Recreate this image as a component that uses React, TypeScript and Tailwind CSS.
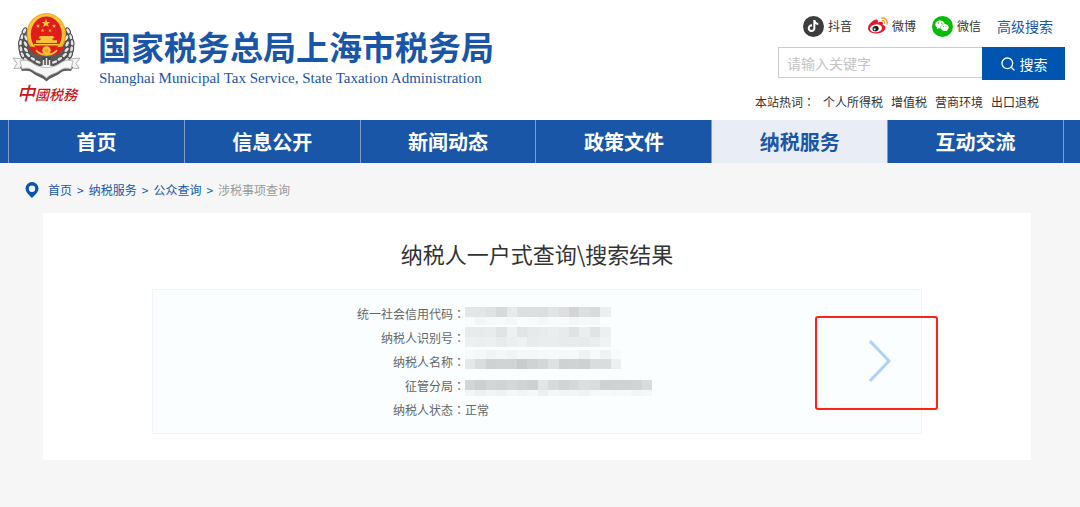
import { FaTiktok, FaWeixin } from "react-icons/fa";
import { FiSearch } from "react-icons/fi";

const navItems = [
  "首页",
  "信息公开",
  "新闻动态",
  "政策文件",
  "纳税服务",
  "互动交流",
];

const hotWords = ["个人所得税", "增值税", "营商环境", "出口退税"];

const crumbs = ["首页", "纳税服务", "公众查询"];

type Band = { y: number; h: number; shades: string[] };

type Field = { label: string; value?: string; bands?: Band[] };

const fields: Field[] = [
  {
    label: "统一社会信用代码",
    bands: [
      {
        y: 5,
        h: 10,
        shades: ["#e3e5e6", "#e3e5e6", "#dfe2e3", "#d7d9da", "#e6eaec", "#dcdedf", "#dcdedf", "#dddfdf", "#e2e5e6", "#dcdedf", "#d2d4d5", "#dddfdf", "#d9dbdb", "#eceff0"],
      },
      {
        y: 15,
        h: 8,
        shades: ["#f9fbfc", "#f3f6f7", "#f6f9fa", "#f6f9fa", "#f5f7f8", "#fafdfe", "#f8fbfc", "#f5f8f9", "#f8fbfc", "#f8fafb", "#f4f7f8", "#f6f9fa", "#f5f8f9"],
      },
    ],
  },
  {
    label: "纳税人识别号",
    bands: [
      {
        y: 1,
        h: 10,
        shades: ["#e8ebec", "#e8ebec", "#e9eced", "#e1e4e5", "#eef1f2", "#e2e4e5", "#e7e9ea", "#e8ebec", "#ebeeef", "#e8ebec", "#e0e3e4", "#ebedee", "#e1e3e4", "#edf0f1"],
      },
      {
        y: 11,
        h: 10,
        shades: ["#edf0f1", "#eceff0", "#edeff0", "#e8ebec", "#ecefef", "#f0f1f3", "#e8ebec", "#eaedee", "#eaedee", "#e8ebec", "#e9ebec", "#e8ebec", "#ebeeef", "#f0f3f4"],
      },
    ],
  },
  {
    label: "纳税人名称",
    bands: [
      {
        y: 0,
        h: 9,
        shades: ["#f7fafb", "#f5f8f9", "#f1f4f5", "#f4f7f8", "#f1f4f5", "#f5f8f9", "#f4f7f8", "#f6f9fa", "#f7fafb", "#f5f8f9", "#f6f9fa", "#eff2f3", "#f7fafb", "#f0f3f4", "#f8fbfc"],
      },
      {
        y: 9,
        h: 10,
        shades: ["#e5e7e8", "#dbdddd", "#d0d2d2", "#d2d4d4", "#d1d3d4", "#c9cbcd", "#d1d3d3", "#d4d6d7", "#dee0e1", "#cfd1d2", "#d1d3d3", "#ced0d1", "#dbdddd", "#dadcdd", "#edf0f1"],
      },
    ],
  },
  {
    label: "征管分局",
    bands: [
      {
        y: 6,
        h: 10,
        shades: ["#d3d5d6", "#cdcfd0", "#d3d5d6", "#d2d4d4", "#d6d8d8", "#d2d4d4", "#ced0d1", "#e0e5e9", "#d8dadb", "#d2d4d5", "#d6d8d9", "#dcdedf", "#dbdddd", "#cfd1d2", "#d0d2d4", "#cfd1d2", "#d1d3d4", "#d9dbdc"],
      },
      {
        y: 16,
        h: 6,
        shades: ["#f3f6f7", "#eef1f2", "#f2f5f6", "#eff2f3", "#f5f8f9", "#f2f5f6", "#f5f8f9", "#edf0f1", "#f4f7f8", "#f2f5f6", "#f3f6f7", "#f0f3f4", "#f6f9fa", "#f7fafb", "#f5f8f9", "#f6f9fa", "#f3f6f7", "#f5f8f9"],
      },
    ],
  },
  { label: "纳税人状态", value: "正常" },
];

// wreath leaves on the left half, mirrored for the right half
const leaves = [
  [24.5, 31, -30],
  [22, 37, -15],
  [26, 38, 25],
  [20.5, 43, -5],
  [25.500, 44, 30],
  [21, 49, 10],
  [26, 50, 40],
  [22.500, 55, 25],
  [28, 55, 50],
  [26, 60, 40],
  [33, 59, 60],
  [38, 62, 70],
];

function Wreath() {
  return (
    <g>
      <path d="M26 28c-5 5-8 12-7.500 20 .5 6 3 12 7 16l10 4 11-4V40z" fill="#5a5a5a" />
      {leaves.map(([x, y, r]) => (
        <ellipse
          key={`${x}-${y}`}
          cx={x}
          cy={y}
          rx="1.9"
          ry="3.4"
          fill="#e4e4e4"
          stroke="#4a4a4a"
          strokeWidth="1"
          transform={`rotate(${-r} ${x} ${y})`}
        />
      ))}
    </g>
  );
}

function Emblem() {
  return (
    <svg viewBox="12 12 70 70" className="size-[70px]" aria-hidden="true">
      <Wreath />
      <g transform="translate(92.6 0) scale(-1 1)">
        <Wreath />
      </g>
      <ellipse cx="46.3" cy="34.5" rx="19.7" ry="21.5" fill="#f2a516" />
      <ellipse cx="46.3" cy="34" rx="18.5" ry="20" fill="#fbc43a" />
      <ellipse cx="46.3" cy="34.500" rx="15.5" ry="18" fill="#e01d1a" />
      <path d="M46 19l1.2 3h3.1l-2.4 2 .9 3-2.8-1.8-2.8 1.8.9-3-2.4-2h3.1z" fill="#fbc43a" />
      <path d="M38 24l.6 1.3h1.4l-1 1 .4 1.5-1.4-.8-1.4.8.4-1.5-1-1h1.4zM54 24l.6 1.3H56l-1 1 .4 1.5-1.4-.8-1.4.8.4-1.5-1-1h1.4zM42.500 28.500l.5 1.200h1.300l-1 .9.4 1.300-1.200-.7-1.200.7.4-1.300-1-.9H42zM50 28.500l.5 1.200h1.300l-1 .9.4 1.300-1.200-.7-1.200.7.4-1.300-1-.9h1.300z" fill="#fbc43a" />
      <path d="M40 36h13l1.500 2.200h-2v2H57V43H36v-2.800h4.500v-2h-2zM34 44h25v1.400H34z" fill="#fbc43a" />
      <path d="M29 47c6-1 9 1 12 3h11c3-2 6-4 12-3-2 6-8 9-12 7H41c-4 2-10-1-12-7z" fill="#e01d1a" />
      <circle cx="46.500" cy="50.500" r="4.200" fill="#fbc43a" />
      <circle cx="46.500" cy="50.500" r="2" fill="#f2a516" />
      <path d="M36 50c2 3 5 4 8 4M57 50c-2 3-5 4-8 4" fill="none" stroke="#fbc43a" strokeWidth="1.500" />
      <path d="M42 57h9l-1 8h-7z" fill="#4a4a4a" />
      <path d="M46.500 58v8M43.500 60v5M49.500 60v5" stroke="#e8e8e8" strokeWidth="1.500" />
      <path d="M13 58l10 1 1 4-1 5-9 .500 3-5zM80 58l-10 1-1 4 1 5 9 .500-3-5z" fill="#f5f5f5" stroke="#aaa" strokeWidth=".9" />
      <path d="M20 67c6-3 9-1 13 2 4 3 9 4 13.500 7 4.500-3 9.500-4 13.500-7 4-3 7-5 13-2l-2 4c-6-1-9 0-12 3-4 3-8 3-12.500 7.500-4.500-4.500-8.500-4.500-12.500-7.500-3-3-6-4-12-3z" fill="#5c5c5c" />
      <path d="M20 61c6-2 10 0 14 3 4 2.500 8 3.500 12.500 3.500S55 66.500 59 64c4-3 8-5 14-3l-2 8c-6-2-9 0-12 2-4 3-8 2.500-12.500 7-4.500-4.500-8.500-4-12.500-7-3-2-6-4-12-2z" fill="#f7f7f7" stroke="#b3b3b3" strokeWidth=".9" />
    </svg>
  );
}

function WeiboIcon() {
  return (
    <svg viewBox="0 0 512 512" className="size-5" aria-hidden="true">
      <ellipse cx="208" cy="315" rx="170" ry="110" fill="#fff" />
      <path
        fill="#e6162d"
        fillRule="evenodd"
        d="M214.8 446.7C108.5 446.7 0 395.3 0 310.4c0-44.3 28-95.4 76.3-143.7C176 67 279.5 65.8 249.9 161c-4 13.1 12.3 5.7 12.3 6 79.5-33.6 140.5-16.8 114 51.4-3.7 9.4 1.1 10.9 8.3 13.1 135.7 42.3 34.8 215.2-169.7 215.2zm143.7-146.3c-5.4-55.7-78.5-94-163.4-85.7-84.8 8.6-148.8 60.3-143.4 116s78.5 94 163.4 85.7c84.8-8.6 148.8-60.3 143.4-116z"
      />
      <path
        fill="#1a1a1a"
        fillRule="evenodd"
        d="M269.400 346.100c-17.100 38.800-66.800 60-109.100 46.300-40.800-13.100-58-53.400-40.300-89.700 17.700-35.400 63.100-55.400 103.400-45.100 42 10.800 63.100 50.200 46 88.500zm-86.300-30c-12.900-5.400-30 .3-38 12.900-8.300 12.900-4.300 28 8.600 34 13.100 6 30.800.3 39.100-12.900 8-13.100 3.700-28.300-9.700-34z"
      />
      <path
        fill="#f6a32b"
        d="M407 177.600c7.600-24-13.400-46.800-37.400-41.700-22 4.800-28.800-28.100-7.100-32.800 50.100-10.900 92.300 37.100 76.500 84.800-6.800 21.200-38.800 10.800-32-10.300zM347.900 35.100c-25.900 5.600-16.800 43.700 8.300 38.300 72.300-15.200 134.800 52.800 111.700 124-7.400 24.200 29.100 37 37.400 12 31.900-99.800-55.100-195.900-157.400-174.300z"
      />
    </svg>
  );
}

function PinIcon() {
  return (
    <svg viewBox="0 0 14 16" className="h-4 w-3.5" aria-hidden="true">
      <path
        fill="#0b56ad"
        fillRule="evenodd"
        d="M7 0a6.500 6.500 0 0 0-6.500 6.500C.5 10.500 4.500 13.200 7 16c2.500-2.800 6.500-5.500 6.500-9.500A6.500 6.500 0 0 0 7 0zm0 3.600a3.200 3.200 0 1 1 0 6.400 3.200 3.200 0 0 1 0-6.400z"
      />
    </svg>
  );
}

function Mosaic({ bands }: { bands: Band[] }) {
  return (
    <svg viewBox="0 0 188 24" className="h-6 w-[188px]" shapeRendering="crispEdges" aria-hidden="true">
      {bands.map((band) =>
        band.shades.map((shade, i) => (
          <rect
            key={`${band.y}-${i}`}
            x={i * 10.4}
            y={band.y}
            width="10.5"
            height={band.h}
            fill={shade}
          />
        ))
      )}
    </svg>
  );
}

function Colon() {
  return <span className="font-['Noto_Sans_CJK_TC',sans-serif]">：</span>;
}

function Header() {
  return (
    <header className="flex h-[120px] items-start justify-between bg-white pr-[15px] pl-3">
      <a href="#" className="flex">
        <div className="flex flex-col items-center pt-3">
          <Emblem />
          <span className="font-['Noto_Sans_CJK_SC',sans-serif] text-sm leading-5 font-medium text-[#c8161d] italic">
            <span className="text-lg leading-5">中</span>國税務
          </span>
        </div>
        <div className="pt-[26px] pl-4 text-[#1a56a8]">
          <h1 className="text-[33px] leading-10 font-bold">国家税务总局上海市税务局</h1>
          <p className="pl-px font-['Liberation_Serif',serif] text-[15px] leading-6">
            Shanghai Municipal Tax Service, State Taxation Administration
          </p>
        </div>
      </a>

      <div className="flex flex-col pt-3.5 text-xs text-[#333]">
        <div className="flex items-center justify-end gap-4 pr-3 leading-6">
          <a href="#" className="flex items-center gap-1">
            <span className="flex size-[21px] items-center justify-center rounded-full bg-[#3d3d3d] text-white">
              <FaTiktok className="size-3" />
            </span>
            抖音
          </a>
          <a href="#" className="flex items-center gap-1">
            <WeiboIcon />
            微博
          </a>
          <a href="#" className="flex items-center gap-1">
            <span className="flex size-[21px] items-center justify-center rounded-full bg-[#09bb07] text-white">
              <FaWeixin className="size-3.5" />
            </span>
            微信
          </a>
          <a href="#" className="text-sm leading-6 text-[#1a56a8]">
            高级搜索
          </a>
        </div>

        <form className="mt-[9px] flex items-start justify-end" onSubmit={(e) => e.preventDefault()}>
          <input
            type="text"
            aria-label="请输入关键字"
            placeholder="请输入关键字"
            className="h-[31px] w-[204px] border border-r-0 border-[#ccc] bg-white px-2 text-sm outline-none placeholder:text-[#c4c4c4]"
          />
          <button
            type="submit"
            className="flex h-[33px] w-[83px] items-center justify-center gap-1 bg-[#0055b0] text-sm text-white"
          >
            <FiSearch className="size-4" />
            搜索
          </button>
        </form>

        <div className="mt-3 flex justify-end gap-2 pr-[26px] leading-5">
          <span>
            本站热词
            <Colon />
          </span>
          {hotWords.map((word) => (
            <a key={word} href="#">
              {word}
            </a>
          ))}
        </div>
      </div>
    </header>
  );
}

function Nav() {
  return (
    <nav className="bg-[#1a56a8] pr-4 pl-2">
      <ul className="grid grid-cols-6 border-l border-[#7f9bc9]">
        {navItems.map((item) => (
          <li key={item} className="border-r border-[#7f9bc9]">
            <a
              href="#"
              className={
                item === "纳税服务"
                  ? "block bg-[#e8edf6] text-center text-xl leading-[43px] font-bold text-[#1a56a8]"
                  : "block text-center text-xl leading-[43px] font-bold text-white"
              }
            >
              {item}
            </a>
          </li>
        ))}
      </ul>
    </nav>
  );
}

export default function App() {
  return (
    <div className="min-h-screen bg-[#f6f6f6] font-['Noto_Sans_CJK_SC',sans-serif]">
      <Header />
      <Nav />

      <main className="pr-[49px] pl-[43px]">
        <div className="-ml-[18px] flex h-[50px] items-center gap-[5px] pt-1 text-xs text-[#1a56a8]">
          <PinIcon />
          <span className="flex gap-[5px] pl-1">
            {crumbs.map((crumb) => (
              <span key={crumb} className="flex gap-[5px]">
                <a href="#">{crumb}</a>
                <span>&gt;</span>
              </span>
            ))}
            <span className="text-[#999]">涉税事项查询</span>
          </span>
        </div>

        <section className="bg-white px-[109px] pt-[22px] pb-[26px]">
          <h2 className="text-center text-[22px] leading-9 text-[#333]">
            纳税人一户式查询\搜索结果
          </h2>

          <div className="relative mt-[18px] flex items-center border border-[#eef6fc] bg-[#fafeff] pt-3 pb-[11px]">
            <dl className="w-full text-xs leading-6 text-[#666]">
              {fields.map((field) => (
                <div key={field.label} className="flex">
                  <dt className="w-[312px] text-right">
                    {field.label}
                    <Colon />
                  </dt>
                  <dd>{field.bands ? <Mosaic bands={field.bands} /> : field.value}</dd>
                </div>
              ))}
            </dl>

            {/* highlight frame around the detail arrow */}
            <button
              type="button"
              aria-label="查看详情"
              className="absolute top-[26px] -right-[17px] flex h-[94px] w-[123px] items-center justify-center rounded-[3px] border-2 border-[#fb2216] pb-1 pl-1.5"
            >
              <svg viewBox="0 0 22 42" className="h-[42px] w-[22px]" aria-hidden="true">
                <path d="M1 1l19 20L1 41" fill="none" stroke="#acd3f6" strokeWidth="3" />
              </svg>
            </button>
          </div>
        </section>
      </main>
    </div>
  );
}
